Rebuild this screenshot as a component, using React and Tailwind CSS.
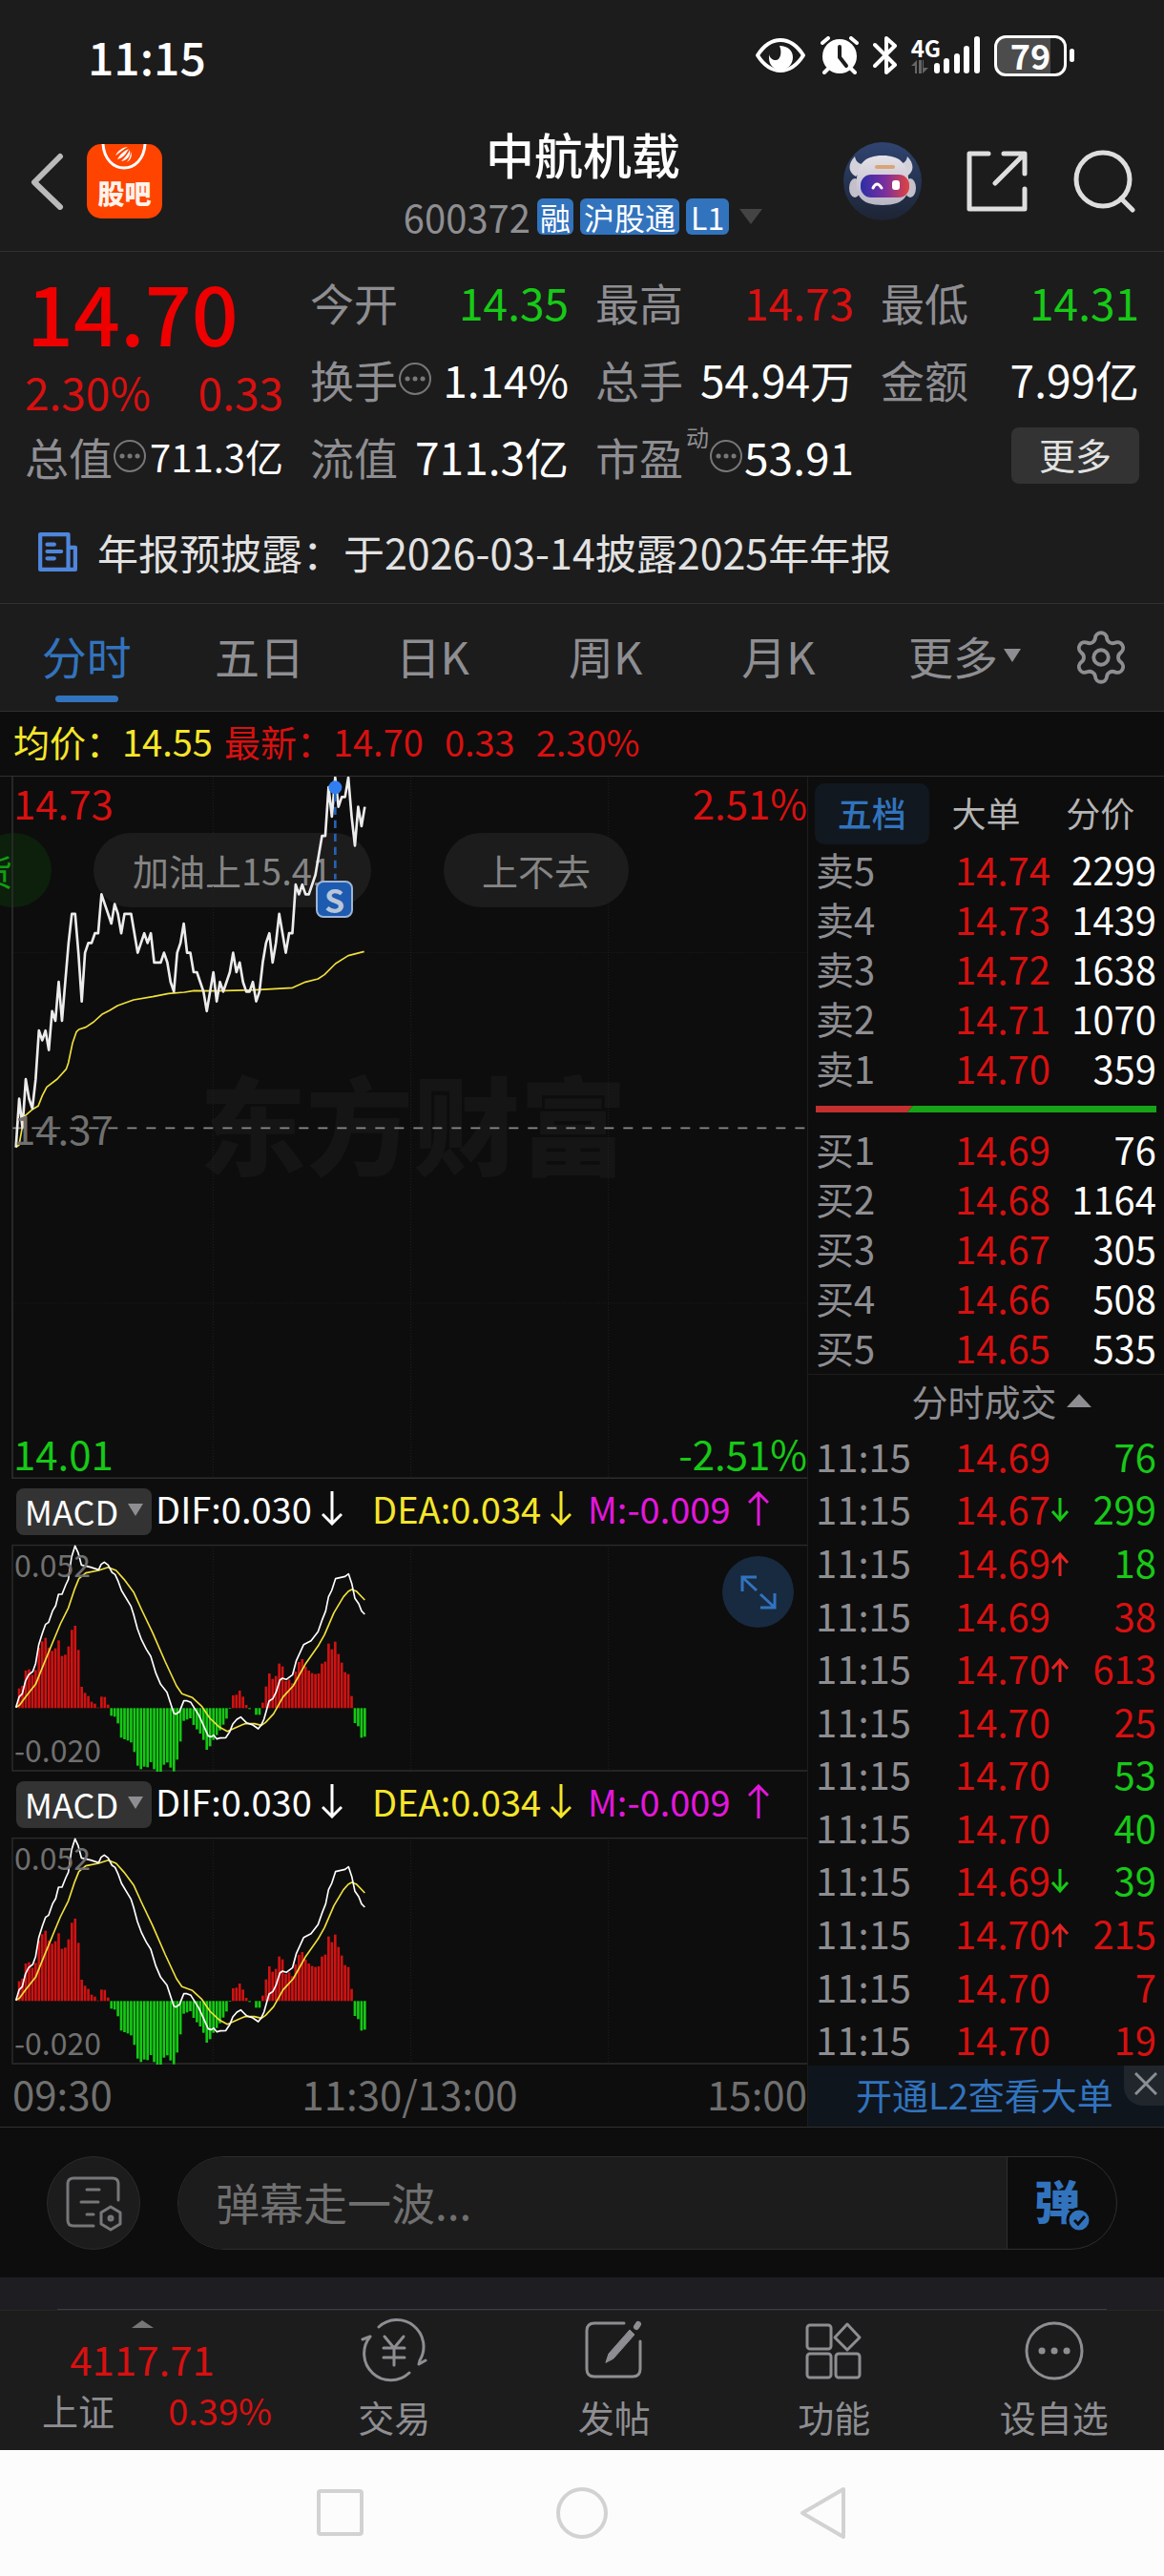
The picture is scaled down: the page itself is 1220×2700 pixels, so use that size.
import { Settings } from "lucide-react";

const RED = "text-[#d81010]";
const GREEN = "text-[#17c917]";
const GRAY = "text-[#8e8e92]";

// cents below the day's high, one value per minute
const prices = [
  38, 33, 36, 31, 33, 34, 31, 26, 27, 26, 28, 24, 25, 21, 25, 21, 17, 14, 14, 18, 23, 18, 17, 17, 16, 16, 12, 13, 14, 15,
  13, 14, 16, 14, 14, 14, 16, 18, 17, 16, 17, 16, 19, 19, 19, 18, 19, 21, 22, 18, 17, 15, 18, 18, 20, 20, 21, 22, 24, 22,
  20, 23, 21, 22, 21, 20, 18, 20, 19, 21, 22, 22, 21, 23, 22, 19, 17, 16, 19, 17, 14, 16, 18, 16, 16, 11, 12, 11, 12, 12,
  11, 10, 8, 6, 6, 1, 4, 0, 3, 2, 2, 0, 4, 7, 3, 5, 3,
];

const average =
  "50,1208 60,1200 69,1150 75,1112 100,1090 120,1078 133,1045 147,1018 180,993 208,962 215,942 228,880 240,845 248,837 270,830 295,813 320,790 345,777 370,762 420,744 480,734 530,724 580,720 610,715 680,716 800,713 920,706 960,688 1000,678 1020,665 1055,630 1095,605 1145,592";

const macdBars = [
  0, -62, -70, -118, -122, -105, -120, -190, -210, -221, -190, -180, -188, -213, -164, -168, -194, -246, -259, -183, -67,
  -48, -38, -20, -14, -2, -36, -35, -11, 24, 27, 48, 93, 98, 102, 108, 138, 181, 192, 184, 186, 170, 192, 201, 200, 178,
  171, 187, 199, 162, 105, 40, 36, 32, 53, 67, 80, 100, 131, 120, 100, 85, 70, 52, 33, 2, -40, -42, -55, -36, -10, 3, 0,
  21, 21, -17, -68, -109, -92, -101, -140, -131, -85, -90, -78, -115, -145, -154, -130, -118, -110, -107, -109, -140,
  -146, -203, -185, -209, -170, -143, -113, -107, -38, 47, 57, 93, 90,
];

const dif =
  "50,748 60,715 70,705 80,665 90,645 103,635 112,610 122,550 133,515 143,487 153,480 165,445 175,428 184,392 195,392 207,362 215,345 225,275 236,240 246,262 256,300 285,307 310,315 318,298 328,291 340,300 352,323 362,330 372,352 382,380 412,430 420,455 432,500 445,535 460,565 474,587 490,640 505,675 525,700 546,765 552,769 564,762 578,727 588,727 600,732 625,772 640,805 655,838 665,840 672,835 682,847 692,844 710,843 722,825 732,800 745,785 757,778 775,796 795,803 812,815 822,802 830,785 846,728 858,720 868,700 880,662 888,656 900,660 920,645 932,600 955,550 978,538 1000,510 1012,475 1024,445 1033,400 1043,380 1055,343 1085,336 1096,328 1106,358 1116,405 1128,422 1137,445 1147,455";

const dea =
  "50,748 62,740 80,715 112,675 130,630 165,545 190,485 215,435 235,375 248,343 270,325 310,317 340,307 365,317 390,345 420,385 445,440 480,513 520,605 555,680 572,705 605,717 635,745 660,782 690,810 715,823 745,810 770,799 800,799 822,804 835,795 860,768 890,715 922,680 960,612 1000,555 1020,520 1050,450 1080,400 1095,383 1106,377 1120,382 1147,410";

const sells = [
  ["卖5", "14.74", "2299"],
  ["卖4", "14.73", "1439"],
  ["卖3", "14.72", "1638"],
  ["卖2", "14.71", "1070"],
  ["卖1", "14.70", "359"],
];

const buys = [
  ["买1", "14.69", "76"],
  ["买2", "14.68", "1164"],
  ["买3", "14.67", "305"],
  ["买4", "14.66", "508"],
  ["买5", "14.65", "535"],
];

const trades = [
  { price: "14.69", vol: "76", side: "sell" },
  { price: "14.67", vol: "299", side: "sell", dir: "down" },
  { price: "14.69", vol: "18", side: "sell", dir: "up" },
  { price: "14.69", vol: "38", side: "buy" },
  { price: "14.70", vol: "613", side: "buy", dir: "up" },
  { price: "14.70", vol: "25", side: "buy" },
  { price: "14.70", vol: "53", side: "sell" },
  { price: "14.70", vol: "40", side: "sell" },
  { price: "14.69", vol: "39", side: "sell", dir: "down" },
  { price: "14.70", vol: "215", side: "buy", dir: "up" },
  { price: "14.70", vol: "7", side: "buy" },
  { price: "14.70", vol: "19", side: "buy" },
];

const step = (list) => 1097 / (list.length - 1);

function StatusBar() {
  return (
    <div className="flex h-[116px] items-center justify-between pl-[92px] pr-[94px] text-white">
      <span className="text-[48px] font-medium leading-[60px]">11:15</span>
      <div className="flex items-center gap-[14px]">
        <svg className="h-[38px] w-[54px]" viewBox="0 0 54 38" fill="none">
          <path d="M3 19C10 8 18 3 27 3s17 5 24 16c-7 11-15 16-24 16S10 30 3 19z" stroke="#fff" strokeWidth="4" strokeLinejoin="round" />
          <path d="M26 9c9 0 14 5 14 12s-5 13-13 13-12-6-12-12v-4c1 4 4 6 7 6 5 0 7-8 4-15z" fill="#fff" />
        </svg>
        <svg className="h-[40px] w-[42px]" viewBox="0 0 42 40" fill="none">
          <circle cx="21" cy="21" r="18" fill="#fff" />
          <path d="M3 7l6-5M39 7l-6-5M9 34l-4 4M33 34l4 4" stroke="#fff" strokeWidth="4" strokeLinecap="round" />
          <path d="M21 11v11l7 9" stroke="#1c1c1c" strokeWidth="4" strokeLinecap="round" />
        </svg>
        <svg className="h-[42px] w-[26px]" viewBox="0 0 26 42" fill="none">
          <path d="M2 10l21 21-9 8V3l9 8L2 32" stroke="#fff" strokeWidth="4" strokeLinejoin="round" strokeLinecap="round" />
        </svg>
        <div className="flex items-end">
          <div className="flex h-[42px] flex-col items-start">
            <span className="text-[24px] font-bold leading-[26px]">4G</span>
            <svg className="h-[14px] w-[18px]" viewBox="0 0 18 14" fill="#666">
              <path d="M0 6L6 0v14H4V6zM8 0h3v14H8zM13 0v8h5l-6 6V0z" />
            </svg>
          </div>
          <svg className="-ml-2 h-[42px] w-[50px]" viewBox="0 0 50 42" stroke="#fff" strokeWidth="6" strokeLinecap="round">
            <path d="M4 32v5M14 27v10M25 22v15M35 14v23M46 4v33" />
          </svg>
        </div>
        <div className="flex items-center gap-[3px]">
          <div className="flex h-[43px] w-[76px] items-center justify-center rounded-[12px] border-[3px] border-white bg-linear-to-r from-[#4c4c4c] from-80% to-[#1c1c1c] to-80%">
            <span className="pb-[2px] text-[36px] font-bold leading-[36px]">79</span>
          </div>
          <div className="h-[14px] w-[5px] rounded-full bg-white" />
        </div>
      </div>
    </div>
  );
}

function RobotAvatar() {
  return (
    <svg className="size-[82px]" viewBox="0 0 82 82">
      <defs>
        <linearGradient id="sky" x1="0" y1="0" x2="0" y2="1">
          <stop offset="0" stopColor="#2f4470" />
          <stop offset="1" stopColor="#1d2434" />
        </linearGradient>
        <linearGradient id="shell" x1="0" y1="0" x2="0" y2="1">
          <stop offset="0" stopColor="#e4e1e8" />
          <stop offset="1" stopColor="#b9b5c4" />
        </linearGradient>
        <linearGradient id="visor" x1="0" y1="0" x2="1" y2="0">
          <stop offset="0" stopColor="#2b2fa8" />
          <stop offset="0.5" stopColor="#7a2f9e" />
          <stop offset="1" stopColor="#e0443f" />
        </linearGradient>
      </defs>
      <circle cx="41" cy="41" r="41" fill="url(#sky)" />
      <path d="M12 15c-7 7-8 16 1 21l12-13c-8 1-12-2-13-8zM67 15c7 7 8 16-1 21L54 23c8 1 12-2 13-8z" fill="#d3d1d9" />
      <ellipse cx="12" cy="48" rx="6" ry="10" fill="#c3c0cb" />
      <ellipse cx="70" cy="48" rx="6" ry="10" fill="#c3c0cb" />
      <path d="M41 14c19 0 25 9 27 23 2 18-3 29-27 29S12 55 14 37c2-14 8-23 27-23z" fill="url(#shell)" />
      <rect x="33" y="24" width="21" height="4" rx="2" fill="#d9a577" />
      <rect x="18" y="34" width="51" height="24" rx="11" fill="url(#visor)" />
      <path d="M31 48q4-8 9 0" stroke="#fff" strokeWidth="3" fill="none" strokeLinecap="round" />
      <rect x="51" y="40" width="8" height="10" rx="3" fill="#fff" />
    </svg>
  );
}

function Header() {
  return (
    <header className="flex h-[148px] items-center justify-between border-b border-[#303030] pl-[32px] pr-[30px]">
      <div className="flex flex-1 items-center gap-[24px]">
        <button aria-label="返回">
          <svg className="h-[60px] w-[35px]" viewBox="0 0 35 60" fill="none" stroke="#bababa" strokeWidth="6" strokeLinecap="round" strokeLinejoin="round">
            <path d="M31 4L4 31l27 26" />
          </svg>
        </button>
        <button className="relative flex h-[78px] w-[79px] items-end justify-center overflow-hidden rounded-[15px] bg-[#ff4400] pb-[11px] text-[28px] font-black leading-[32px] text-[#fff3ea]">
          <svg className="absolute left-[15px] top-0 h-[28px] w-[48px]" viewBox="0 0 48 28" fill="none">
            <path d="M2 0c1 16 11 25 22 25S45 16 46 0" stroke="#fff" strokeWidth="3" />
            <path d="M15 12c3-6 9-9 13-9-6 3-8 6-13 9zM17 16c4-7 8-9 12-11-3 5-5 9-12 11zM21 18c5-5 8-9 9-12 1 6-2 11-9 12zM27 19c3-4 4-8 4-11 2 4 0 9-4 11z" fill="#fff" />
          </svg>
          股吧
        </button>
      </div>
      <div className="flex flex-col items-center gap-[16px] pb-1">
        <h1 className="text-[51px] font-medium leading-[62px] text-white">中航机载</h1>
        <div className="flex h-[38px] items-center gap-[7px] text-[32px] leading-[38px] text-white">
          <span className={`${GRAY} text-[40px]`}>600372</span>
          <span className="rounded-[6px] bg-[#3273bd] px-[3px]">融</span>
          <span className="rounded-[6px] bg-[#3273bd] px-1">沪股通</span>
          <span className="rounded-[6px] bg-[#3273bd] px-[5px]">L1</span>
          <svg className="ml-1 h-[16px] w-[24px]" viewBox="0 0 24 16" fill="#444">
            <path d="M0 0h24L12 16z" />
          </svg>
        </div>
      </div>
      <div className="flex flex-1 items-center justify-end gap-[46px]">
        <button aria-label="智能助手">
          <RobotAvatar />
        </button>
        <button aria-label="分享">
          <svg className="size-[66px]" viewBox="0 0 66 66" fill="none" stroke="#dedede" strokeWidth="5" strokeLinecap="round" strokeLinejoin="round">
            <path d="M24 4H4v58h58V41M40 4h22v21M61 5L31 35" />
          </svg>
        </button>
        <button aria-label="搜索">
          <svg className="size-[66px]" viewBox="0 0 66 66" fill="none" stroke="#dedede" strokeWidth="5" strokeLinecap="round">
            <circle cx="32" cy="31" r="28" />
            <path d="M51 51l12 12" />
          </svg>
        </button>
      </div>
    </header>
  );
}

function InfoDots() {
  return (
    <svg className="size-[36px] shrink-0" viewBox="0 0 36 36" fill="none" stroke="#77777a" strokeWidth="2">
      <circle cx="18" cy="18" r="16" />
      <path d="M10 18h.1M18 18h.1M26 18h.1" strokeWidth="5" strokeLinecap="round" />
    </svg>
  );
}

function Stat({ label, value, color = "text-white", small = false, info = false }) {
  return (
    <div className="flex h-[81px] items-center justify-between whitespace-nowrap">
      <span className={`${GRAY} flex items-center`}>
        {label}
        {info && <InfoDots />}
      </span>
      <span className={`${color} ${small ? "text-[40px]" : ""}`}>{value}</span>
    </div>
  );
}

function Quote() {
  return (
    <section className="border-b border-[#303030] pt-[11px]">
      <div className="grid grid-cols-4 gap-x-[28px] pl-[26px] pr-[26px] text-[46px] leading-[54px]">
        <div>
          <div className="flex h-[162px] flex-col justify-between">
            <strong className="pl-[2px] text-[86px] font-medium leading-[102px] text-[#ee0000]">14.70</strong>
            <div className={`${RED} flex justify-between`}>
              <span>2.30%</span>
              <span>0.33</span>
            </div>
          </div>
          <Stat label="总值" value="711.3亿" info small />
        </div>
        <div>
          <Stat label="今开" value="14.35" color={GREEN} />
          <Stat label="换手" value="1.14%" info />
          <Stat label="流值" value="711.3亿" />
        </div>
        <div>
          <Stat label="最高" value="14.73" color={RED} />
          <Stat label="总手" value="54.94万" />
          <Stat
            label={
              <>
                市盈<sup className="-top-5 pl-[3px] text-[24px] leading-[24px]">动</sup>
              </>
            }
            value="53.91"
            info
          />
        </div>
        <div>
          <Stat label="最低" value="14.31" color={GREEN} />
          <Stat label="金额" value="7.99亿" />
          <div className="flex h-[81px] items-center justify-end">
            <button className="h-[59px] w-[134px] rounded-[8px] bg-[#333] pb-1 text-[38px] leading-[50px] text-[#e2e2e2]">更多</button>
          </div>
        </div>
      </div>
      <a href="#notice" className="flex h-[114px] items-center gap-[21px] pl-[39px] pt-1.5 text-[43px] leading-[54px] text-[#e2e2e2]">
        <svg className="size-[42px]" viewBox="0 0 40 40" fill="none" stroke="#4f86dc" strokeWidth="4" strokeLinejoin="round" strokeLinecap="round">
          <path d="M3 3h28v35H3zM31 16h7v22h-7M10 13h7M10 20h14M10 27h7" />
        </svg>
        年报预披露：于2026-03-14披露2025年年报
      </a>
    </section>
  );
}

function PeriodTabs() {
  return (
    <nav className={`${GRAY} flex h-[113px] border-b border-[#303030] text-[47px] leading-[54px]`}>
      <div className="grid flex-1 grid-cols-6">
        <button className="relative pb-1 text-[#3273bd]">
          分时
          <span className="absolute bottom-[9px] left-1/2 h-[7px] w-[66px] -translate-x-1/2 rounded-full bg-[#3273bd]" />
        </button>
        <button className="pb-1">五日</button>
        <button className="pb-1">日K</button>
        <button className="pb-1">周K</button>
        <button className="pb-1">月K</button>
        <button className="flex items-center justify-end gap-[6px] pb-1 pr-[18px]">
          更多
          <svg className="h-[14px] w-[18px]" viewBox="0 0 18 14" fill="#8e8e92">
            <path d="M0 0h18L9 14z" />
          </svg>
        </button>
      </div>
      <button aria-label="设置" className="flex w-[132px] items-center justify-center">
        <Settings className="size-[62px]" strokeWidth={1.5} />
      </button>
    </nav>
  );
}

function PriceChart() {
  const line = prices.map((p, i) => `${(50 + i * step(prices)).toFixed(1)},${45 + p * 30.6}`).join(" ");
  return (
    <div className="relative h-[736px] overflow-hidden">
      <div className="absolute inset-x-0 top-[296px] pl-[20px] text-center text-[112px] font-black leading-[130px] text-[#151515]">东方财富</div>
      <div className="absolute left-0 top-[59px] flex items-center whitespace-nowrap text-[38px] leading-[78px] text-[#858585]">
        <span className="-ml-[25px] rounded-full bg-[#0c200c] pr-[41px] text-[#129c12]">货</span>
        <span className="ml-[44px] rounded-full bg-[#1c1c1c] px-[41px]">加油上15.41</span>
        <span className="ml-[76px] rounded-full bg-[#1c1c1c] px-[40px]">上不去</span>
      </div>
      <svg className="absolute inset-0 size-full" viewBox="0 42 2538 2208" preserveAspectRatio="none" fill="none">
        <path d="M670 45v2200M1292 45v2200M1913 45v2200M40 595h2498M40 1698h2498" stroke="#222" strokeWidth="3" strokeDasharray="3 6" />
        <path d="M39 42v2206h2499" stroke="#2d2d2d" strokeWidth="5" />
        <path d="M40 1147h2498" stroke="#8a8a8a" strokeWidth="5" strokeDasharray="30 30" />
        <polyline points={average} stroke="#efe03c" strokeWidth="5" strokeLinejoin="round" />
        <polyline points={line} stroke="#ececec" strokeWidth="8" strokeLinejoin="round" />
        <path d="M1054 95v270" stroke="#2562b4" strokeWidth="8" strokeDasharray="25 17" />
        <circle cx="1054" cy="76" r="21" fill="#2f7ff0" />
      </svg>
      <div className="absolute left-[331px] top-[109px] flex size-[39px] items-center justify-center rounded-[8px] border-2 border-[#9fb4d4] bg-[#1d5bb0] text-[34px] font-bold leading-[34px] text-[#b9c6da]">
        S
      </div>
      <div className="absolute inset-0 flex flex-col justify-between pl-[14px] text-[42px] leading-[54px]">
        <div className={`${RED} flex justify-between`}>
          <span>14.73</span>
          <span>2.51%</span>
        </div>
        <span className="text-[#707070]">14.37</span>
        <div className={`${GREEN} flex justify-between`}>
          <span>14.01</span>
          <span>-2.51%</span>
        </div>
      </div>
    </div>
  );
}

function Arrow({ up }) {
  return (
    <svg className="h-[36px] w-[22px] shrink-0" viewBox="0 0 22 36" fill="none" stroke="currentColor" strokeWidth="3">
      <path d={up ? "M11 36V2M1 12L11 2l10 10" : "M11 0v34M1 24l10 10 10-10"} />
    </svg>
  );
}

function Macd() {
  const dx = step(macdBars);
  return (
    <div>
      <div className="flex h-[69px] items-center whitespace-nowrap pl-[17px] text-[38px] leading-[50px]">
        <button className="flex h-[49px] w-[142px] items-center justify-center gap-[10px] rounded-[8px] bg-[#333] pb-1 text-[36px] leading-[42px] text-white">
          MACD
          <svg className="h-[13px] w-[16px]" viewBox="0 0 16 13" fill="#8e8e92">
            <path d="M0 0h16L8 13z" />
          </svg>
        </button>
        <div className="flex flex-1 items-center pb-2">
          <span className="flex w-[229px] items-center gap-[10px] pl-[4px] text-white">
            DIF:0.030 <Arrow />
          </span>
          <span className="flex w-[228px] items-center gap-[10px] pl-[2px] text-[#f5e62a]">
            DEA:0.034 <Arrow />
          </span>
          <span className="flex items-center gap-[18px] text-[#e416dc]">
            M:-0.009 <Arrow up />
          </span>
        </div>
      </div>
      <div className="relative h-[238px]">
        <svg className="absolute inset-0 size-full" viewBox="0 236 2538 714" preserveAspectRatio="none" fill="none">
          <path d="M670 236v714M1292 236v714M1913 236v714" stroke="#222" strokeWidth="3" strokeDasharray="3 6" />
          <path d="M2538 238H39v709h2499" stroke="#2d2d2d" strokeWidth="4" />
          {macdBars.map((h, i) => (
            <rect key={i} x={46 + i * dx} y={h < 0 ? 750 + h : 750} width="8" height={Math.abs(h)} fill={h < 0 ? "#d01212" : "#14c914"} />
          ))}
          <polyline points={dea} stroke="#efe03c" strokeWidth="5" strokeLinejoin="round" />
          <polyline points={dif} stroke="#fff" strokeWidth="5" strokeLinejoin="round" />
        </svg>
        <div className="absolute inset-0 flex flex-col justify-between pb-1 pl-[15px] text-[32px] leading-[40px] text-[#707070]">
          <span>0.052</span>
          <span>-0.020</span>
        </div>
      </div>
    </div>
  );
}

function DepthTable({ rows }) {
  return (
    <table className="w-full table-fixed">
      <tbody>
        {rows.map(([name, price, vol]) => (
          <tr key={name} className="h-[52px]">
            <th className={`${GRAY} text-left font-normal`}>{name}</th>
            <td className={`${RED} w-[130px] text-right`}>{price}</td>
            <td className="w-[111px] text-right text-white">{vol}</td>
          </tr>
        ))}
      </tbody>
    </table>
  );
}

function TradeTable() {
  return (
    <table className="h-full w-full table-fixed">
      <tbody>
        {trades.map((t, i) => (
          <tr key={i}>
            <td className={GRAY}>11:15</td>
            <td className={`${RED} w-[110px] text-right`}>{t.price}</td>
            <td className={`w-[20px] ${t.dir === "up" ? "text-[#e62222]" : GREEN}`}>
              {t.dir && (
                <svg className="mt-1 h-[26px] w-[20px]" viewBox="0 0 20 26" fill="none" stroke="currentColor" strokeWidth="3">
                  <path d={t.dir === "up" ? "M10 26V3M2 12l8-9 8 9" : "M10 0v23M2 14l8 9 8-9"} />
                </svg>
              )}
            </td>
            <td className={`w-[91px] text-right ${t.side === "buy" ? RED : GREEN}`}>{t.vol}</td>
          </tr>
        ))}
      </tbody>
    </table>
  );
}

function OrderBook() {
  return (
    <aside className="flex w-[374px] shrink-0 flex-col border-l border-[#1d1d1d] pt-[7px] text-[40px] leading-[50px]">
      <div className="flex h-[64px] px-[7px] text-[36px] text-[#b4b4b4]">
        <button className="flex-1 rounded-[10px] bg-[#11181f] pb-1 font-medium text-[#3273bd]">五档</button>
        <button className="flex-1 pb-1">大单</button>
        <button className="flex-1 pb-1">分价</button>
      </div>
      <div className="px-[8px]">
        <DepthTable rows={sells} />
        <svg className="mb-[12px] mt-[14px] block h-[7px] w-full" viewBox="0 0 358 7" preserveAspectRatio="none">
          <path d="M0 0h102l-6 7H0z" fill="#c43030" />
          <path d="M102 0h256v7H96z" fill="#17a317" />
        </svg>
        <DepthTable rows={buys} />
      </div>
      <button className={`${GRAY} mt-[2px] flex h-[58px] items-center justify-center gap-[10px] border-t border-[#1d1d1d] pb-1 pl-[32px] text-[38px]`}>
        分时成交
        <svg className="h-[14px] w-[26px]" viewBox="0 0 26 14" fill="#8e8e92">
          <path d="M0 14h26L13 0z" />
        </svg>
      </button>
      <div className="flex-1 px-[8px]">
        <TradeTable />
      </div>
      <div className="relative h-[64px] bg-[#0f151d]">
        <a href="#l2" className="block pl-[50px] text-[38px] leading-[60px] text-[#3273bd]">
          开通L2查看大单
        </a>
        <button aria-label="关闭" className="absolute right-0 top-0 flex size-[42px] items-center justify-center rounded-bl-[20px] bg-[#20262b] pb-1 pl-1">
          <svg className="size-[24px]" viewBox="0 0 24 24" stroke="#8a8f94" strokeWidth="3">
            <path d="M1 1l22 22M23 1L1 23" />
          </svg>
        </button>
      </div>
    </aside>
  );
}

function Board() {
  return (
    <main className="flex border-b border-[#303030]">
      <div className="relative min-w-0 flex-1">
        <PriceChart />
        <Macd />
        <Macd />
        <div className="flex h-[65px] justify-between pl-[13px] text-[42px] leading-[60px] text-[#707070]">
          <span>09:30</span>
          <span>11:30/13:00</span>
          <span>15:00</span>
        </div>
        <button aria-label="全屏" className="absolute right-[14px] top-[817px] flex size-[75px] items-center justify-center rounded-full bg-[#182a40]">
          <svg className="size-[38px]" viewBox="0 0 38 38" fill="none" stroke="#3273bd" strokeWidth="3">
            <path d="M2 18V3h15M3 4l14 13M36 20v15H21M35 34L21 21" />
          </svg>
        </button>
      </div>
      <OrderBook />
    </main>
  );
}

function DanmuBar() {
  return (
    <div className="flex h-[157px] items-center gap-[39px] px-[49px]">
      <button aria-label="弹幕设置" className="flex size-[98px] shrink-0 items-center justify-center rounded-full border border-[#2b2b2b] bg-[#1c1c1c]">
        <svg className="size-[60px]" viewBox="0 0 60 60" fill="none" stroke="#77777a" strokeWidth="3" strokeLinecap="round">
          <path d="M56 27V10q0-6-6-6H9q-6 0-6 6v38q0 6 6 6h21M23 16h13M17 29h18M23 42h7" />
          <path d="M48 34l10 6v12l-10 6-10-6V40z" strokeLinejoin="round" />
          <circle cx="48" cy="46" r="2" />
        </svg>
      </button>
      <div className="flex h-[98px] flex-1 overflow-hidden rounded-full border border-[#2e2e2e]">
        <input
          aria-label="弹幕"
          placeholder="弹幕走一波..."
          className="min-w-0 flex-1 bg-[#1c1c1c] pb-1 pl-[39px] text-[46px] leading-[60px] outline-none placeholder:text-[#707070]"
        />
        <button className="relative w-[115px] border-l border-[#2e2e2e] pb-2 pr-[10px] text-[48px] font-black leading-[60px] text-[#3273bd]">
          弹
          <svg className="absolute bottom-[16px] right-[25px] size-[28px]" viewBox="0 0 28 28" fill="none">
            <circle cx="14" cy="14" r="12" fill="#3273bd" stroke="#0d0d0d" strokeWidth="3" />
            <path d="M9 14l4 4 7-8" stroke="#0d0d0d" strokeWidth="3" />
          </svg>
        </button>
      </div>
    </div>
  );
}

const navItems = [
  {
    label: "交易",
    icon: (
      <>
        <path d="M20 11a28 28 0 0 1 43 35l-1 4 7-4M52 59A28 28 0 0 1 11 21l-8 3" transform="translate(-1 -1)" />
        <path d="M25 20l10 12 10-12M24 32h22M24 42h22M35 32v18" />
      </>
    ),
  },
  {
    label: "发帖",
    icon: (
      <>
        <path d="M45 6H14q-8 0-8 8v40q0 8 8 8h40q8 0 8-8V25" />
        <path d="M26 47l3-9 22-25 5 5-22 25z" fill="#8e8e92" strokeWidth="1" />
        <path d="M58 10l2-3" strokeWidth="6" />
      </>
    ),
  },
  {
    label: "功能",
    icon: (
      <>
        <rect x="7" y="8" width="25" height="25" rx="3" />
        <rect x="7" y="38" width="25" height="25" rx="3" />
        <rect x="37" y="38" width="25" height="25" rx="3" />
        <path d="M49 7l13 14-13 13-13-13z" />
      </>
    ),
  },
  {
    label: "设自选",
    icon: (
      <>
        <circle cx="35" cy="35" r="29" />
        <path d="M22 35h.1M35 35h.1M48 35h.1" strokeWidth="7" />
      </>
    ),
  },
];

function BottomNav() {
  return (
    <nav className={`${GRAY} flex h-[147px] border-t border-[#262626] bg-[#1c1c1c] text-[38px] leading-[50px]`}>
      <button className="flex w-[298px] flex-col items-center pt-[10px]">
        <svg className="h-[8px] w-[23px]" viewBox="0 0 23 8" fill="#77777a">
          <path d="M0 8h23L11 0z" />
        </svg>
        <span className={`${RED} mt-[6px] text-[42px] leading-[52px]`}>4117.71</span>
        <span className="mt-[3px] flex w-full justify-between pl-[44px] pr-[13px]">
          上证
          <span className={RED}>0.39%</span>
        </span>
      </button>
      {navItems.map((item) => (
        <button key={item.label} className="flex flex-1 flex-col items-center pt-[7px]">
          <svg className="size-[70px]" viewBox="0 0 70 70" fill="none" stroke="#8e8e92" strokeWidth="3" strokeLinecap="round" strokeLinejoin="round">
            {item.icon}
          </svg>
          <span className="mt-[9px]">{item.label}</span>
        </button>
      ))}
    </nav>
  );
}

function SystemNav() {
  return (
    <div className="flex h-[132px] items-center justify-center gap-[193px] bg-[#fcfcfc]">
      <button aria-label="最近任务">
        <svg className="size-[60px]" viewBox="0 0 60 60" fill="none" stroke="#d2d2d2" strokeWidth="4">
          <rect x="7" y="7" width="45" height="45" rx="2" />
        </svg>
      </button>
      <button aria-label="主屏幕">
        <svg className="size-[60px]" viewBox="0 0 60 60" fill="none" stroke="#d2d2d2" strokeWidth="4">
          <circle cx="30" cy="30" r="25" />
        </svg>
      </button>
      <button aria-label="返回上一页">
        <svg className="size-[60px]" viewBox="0 0 60 60" fill="none" stroke="#d2d2d2" strokeWidth="4" strokeLinejoin="round">
          <path d="M51 5v50L8 30z" />
        </svg>
      </button>
    </div>
  );
}

export default function App() {
  return (
    <div className="bg-[#0d0d0d] font-['Noto_Sans_CJK_SC',sans-serif]">
      <div className="bg-[#1c1c1c]">
        <StatusBar />
        <Header />
        <Quote />
        <PeriodTabs />
      </div>
      <div className={`${RED} flex h-[68px] items-center gap-[22px] border-b border-[#303030] pb-1.5 pl-[14px] text-[38px] leading-[54px]`}>
        <span>
          <span className="mr-[12px] text-[#f5e62a]">均价：14.55</span>
          最新：14.70
        </span>
        <span>0.33</span>
        <span>2.30%</span>
      </div>
      <Board />
      <DanmuBar />
      <div className="h-[34px] bg-[#1e1d22] px-[60px] pt-[33px]">
        <div className="h-px bg-[#3c3a4c]" />
      </div>
      <BottomNav />
      <SystemNav />
    </div>
  );
}
